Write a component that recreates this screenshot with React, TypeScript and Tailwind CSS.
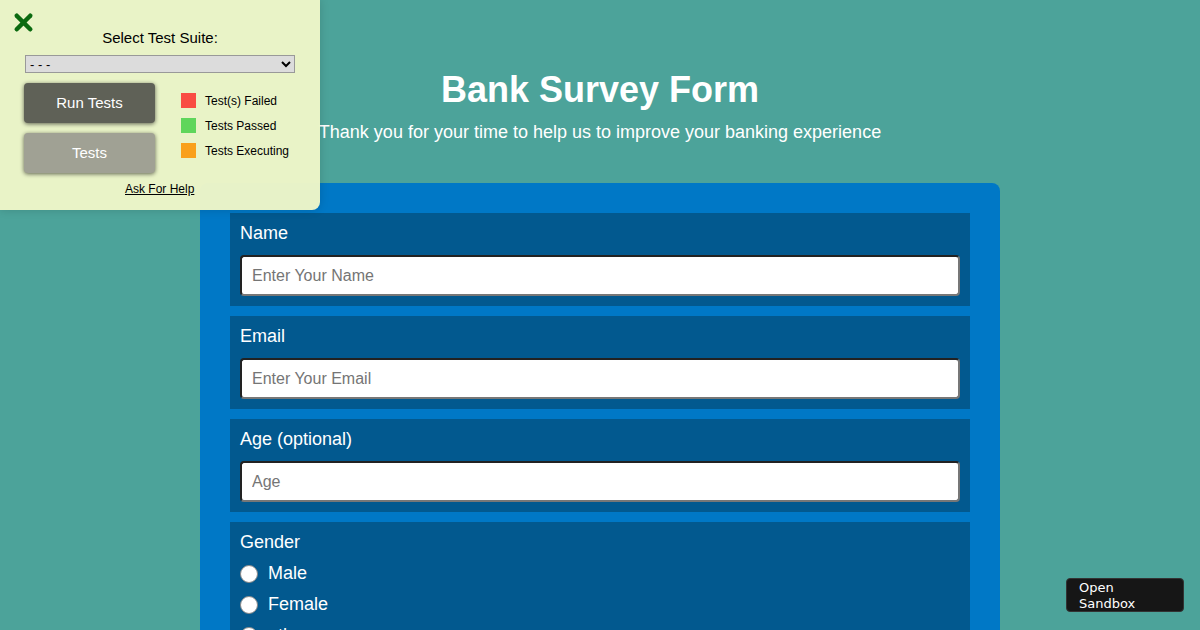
import { X } from "lucide-react";

const inputCls =
  "w-full h-[41px] rounded-[4px] border-2 border-t-[#222] border-l-[#222] border-b-[#777] border-r-[#777] bg-white px-[10px] text-[16px] text-black placeholder:text-[#757575] outline-none";

function Field({ label, placeholder }: { label: string; placeholder: string }) {
  return (
    <div className="bg-[#02598f] px-[10px] pt-[9px] pb-[10px]">
      <label className="block text-[18px] leading-[22px] text-white mb-[11px]">{label}</label>
      <input className={inputCls} placeholder={placeholder} />
    </div>
  );
}

function Radio({ label }: { label: string }) {
  return (
    <label className="flex items-center h-[31px] text-[18px] text-white">
      <span className="w-[18px] h-[18px] rounded-full bg-white border border-[#888] mr-[10px]" />
      {label}
    </label>
  );
}

export default function App() {
  return (
    <div className="relative w-[1200px] h-[630px] overflow-hidden bg-[#4ca39a] font-['Liberation_Sans',Arial,sans-serif]">
      <header className="flex flex-col items-center pt-[68px]">
        <h1 className="text-[36px] leading-[44px] font-bold text-white">Bank Survey Form</h1>
        <p className="mt-[9px] text-[18px] leading-[22px] text-white">
          Thank you for your time to help us to improve your banking experience
        </p>
      </header>

      <form className="mx-auto mt-[40px] w-[800px] rounded-[8px] bg-[#0078c6] p-[30px] flex flex-col gap-[10px]">
        <Field label="Name" placeholder="Enter Your Name" />
        <Field label="Email" placeholder="Enter Your Email" />
        <Field label="Age (optional)" placeholder="Age" />
        <div className="bg-[#02598f] px-[10px] pt-[9px] pb-[10px]">
          <div className="text-[18px] leading-[22px] text-white mb-[5px]">Gender</div>
          <Radio label="Male" />
          <Radio label="Female" />
          <Radio label="other" />
        </div>
      </form>

      <div className="absolute left-0 top-0 w-[320px] h-[210px] rounded-br-[8px] bg-[#eef6c8]/[0.97] shadow-[0_0_10px_rgba(0,0,0,0.15)]">
        <X className="absolute left-[10px] top-[9px] w-[27px] h-[27px] text-[#0b6a10]" strokeWidth={4} />
        <div className="pt-[29px] text-center text-[15px] leading-[18px] text-black">Select Test Suite:</div>
        <div className="mx-[25px] mt-[8px]">
          <select className="block w-full h-[18px] bg-[#dcdcdc] border border-[#999] text-[13px] leading-[14px] px-0 text-black">
            <option>- - -</option>
          </select>
        </div>
        <div className="flex mt-[10px] pl-[24px]">
          <div className="flex flex-col gap-[10px]">
            <button className="w-[131px] h-[40px] rounded-[4px] bg-[#5f6157] text-white text-[15px] shadow-[0_1px_4px_rgba(0,0,0,0.6)]">
              Run Tests
            </button>
            <button className="w-[131px] h-[40px] rounded-[4px] bg-[#a0a194] text-white text-[15px] shadow-[0_1px_4px_rgba(0,0,0,0.6)]">
              Tests
            </button>
          </div>
          <div className="ml-[26px] mt-[10px] flex flex-col gap-[10px] text-[12px] text-black">
            <div className="flex items-center h-[15px]">
              <span className="w-[15px] h-[15px] bg-[#f94c43] mr-[9px]" />
              Test(s) Failed
            </div>
            <div className="flex items-center h-[15px]">
              <span className="w-[15px] h-[15px] bg-[#5fd65b] mr-[9px]" />
              Tests Passed
            </div>
            <div className="flex items-center h-[15px]">
              <span className="w-[15px] h-[15px] bg-[#f9a01b] mr-[9px]" />
              Tests Executing
            </div>
          </div>
        </div>
        <div className="mt-[9px] pl-[125px] text-[12px] leading-[14px] underline text-black">Ask For Help</div>
      </div>

      <div className="absolute left-[1066px] top-[578px] w-[118px] h-[34px] rounded-[4px] bg-[#161616] border border-[#333] px-[12px] py-[1px] text-[13px] leading-[16px] text-white font-['DejaVu_Sans',sans-serif]">
        Open Sandbox
      </div>
    </div>
  );
}
